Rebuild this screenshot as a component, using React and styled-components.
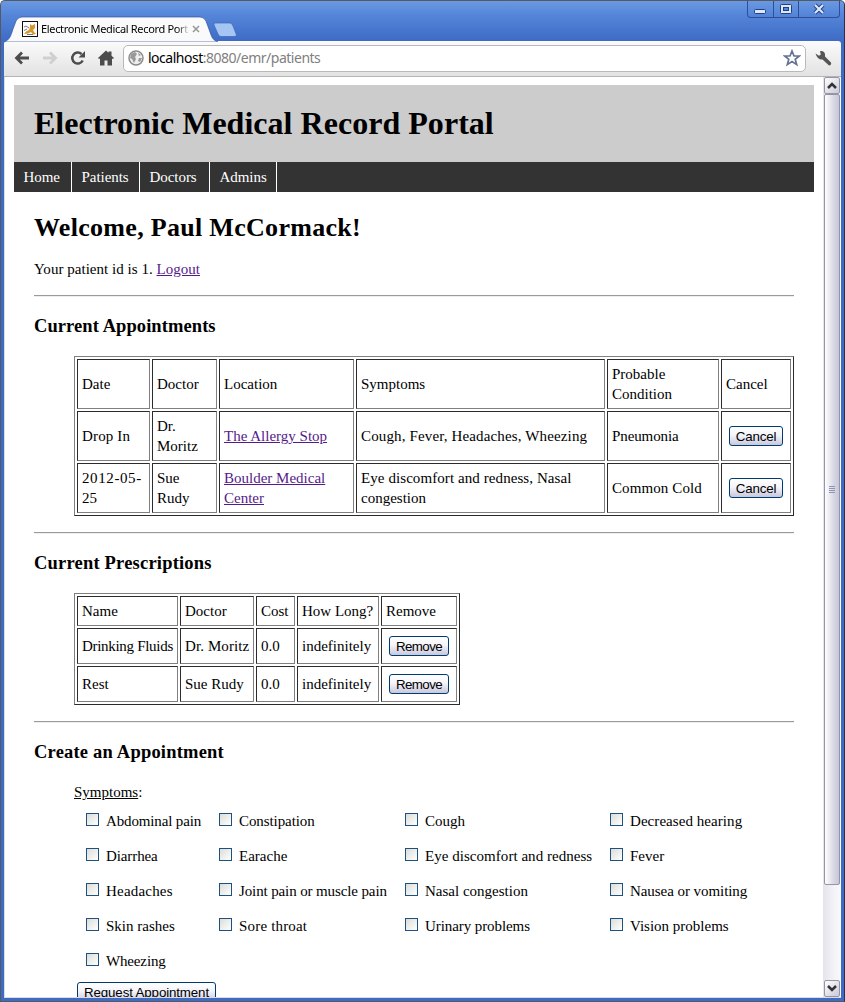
import React from 'react';
import styled, { createGlobalStyle } from 'styled-components';

const Global = createGlobalStyle`
  * { box-sizing: border-box; }
  body { margin: 0; background: #fff; overflow: hidden; }
`;

const Window = styled.div`
  width: 845px;
  height: 1002px;
  display: flex;
  flex-direction: column;
  border: 1px solid #57595e;
  border-right-color: #26324f;
  border-radius: 5px 5px 0 0;
  background: linear-gradient(#6a9ae2 0, #5585d8 14px, #3d6bc6 40px, #3d6bc6 100%);
  padding: 0 3px 3px 3px;
  font-family: "Noto Sans", sans-serif;
  overflow: hidden;
`;

const TitleBar = styled.div`
  height: 40px;
  flex: none;
  display: flex;
  align-items: flex-end;
  position: relative;
`;

const Tab = styled.div`
  width: 214px;
  height: 25px;
  position: relative;
  display: flex;
  align-items: center;
  padding-left: 18px;
  font-size: 11px;
  line-height: 16px;
`;

const TabShape = styled.svg`
  position: absolute;
  left: 0;
  top: 0;
`;

const Favicon = styled.svg`
  position: relative;
  flex: none;
`;

const TabTitle = styled.span`
  position: relative;
  margin-left: 3px;
  width: 147px;
  flex: none;
  white-space: nowrap;
  overflow: hidden;
  letter-spacing: -0.33px;
  mask-image: linear-gradient(90deg, #000 136px, transparent 149px);
`;

const TabClose = styled.svg`
  position: relative;
  margin-left: 4px;
  flex: none;
`;

const NewTab = styled.svg`
  margin: 0 0 3px -6px;
`;

const Controls = styled.div`
  position: absolute;
  right: 1px;
  top: 0;
  height: 17px;
  display: flex;
  border: 1px solid #2e4f97;
  border-top: 0;
  border-radius: 0 0 4px 4px;
`;

const Control = styled.div`
  width: ${(p) => p.$w}px;
  display: flex;
  align-items: center;
  justify-content: center;
  border-left: ${(p) => (p.$divided ? '1px solid #2e4f97' : '0')};
`;

const Toolbar = styled.div`
  height: 36px;
  flex: none;
  display: flex;
  align-items: center;
  padding: 0 9px 1px 10px;
  background: linear-gradient(#fbfbfb, #e2e2e2);
  border-bottom: 1px solid #b4b4b4;
  border-radius: 3px 3px 0 0;
`;

const Tool = styled.svg`
  flex: none;
  margin-right: ${(p) => p.$gap || 0}px;
`;

const Omnibox = styled.div`
  flex: 1;
  height: 27px;
  display: flex;
  align-items: center;
  padding: 0 4px 0 4px;
  background: #fff;
  border: 1px solid #b9b9b9;
  border-radius: 5px;
  margin-right: 9px;
`;

const Url = styled.div`
  flex: 1;
  margin-left: 4px;
  font-size: 14px;
  line-height: 20px;
  color: #808080;
  letter-spacing: -0.49px;
  b { color: #000; font-weight: 400; }
`;

const Viewport = styled.div`
  flex: 1;
  min-height: 0;
  border: solid #dcdcdc;
  border-width: 0 0 1px 1px;
  display: flex;
  overflow: hidden;
  background: #fff;
`;

const Page = styled.div`
  flex: 1;
  min-width: 0;
  padding: 8px 9px 0 9px;
  overflow: hidden;
  font: 15px/20px "Liberation Serif", serif;
  color: #000;
`;

const Banner = styled.header`
  height: 77px;
  background: #ccc;
  padding-left: 20px;
  h1 { margin: 0; font-size: 32px; line-height: 77px; letter-spacing: 0.03px; }
`;

const Nav = styled.nav`
  display: flex;
  height: 30px;
  background: #333;
`;

const NavItem = styled.a`
  width: ${(p) => p.$w}px;
  padding: 5px 0 5px 9.500px;
  border-right: 1px solid #fff;
  color: #fff;
  white-space: nowrap;
  letter-spacing: -0.05px;
`;

const Main = styled.main`
  padding: 19px 20px 0;
`;

const Welcome = styled.h2`
  margin: 0 0 14px;
  font-size: 26px;
  line-height: 34px;
  letter-spacing: 0.3px;
`;

const Line = styled.p`
  margin: 0 0 16px;
  letter-spacing: 0.03px;
`;

const Rule = styled.hr`
  height: 2px;
  margin: 0;
  border: 0;
  border-top: 1px solid #9a9a9a;
  background: #eee;
`;

const Heading = styled.h3`
  margin: 17px 0 18px;
  font-size: 18.5px;
  line-height: 24px;
  letter-spacing: ${(p) => p.$ls}px;
`;

const Table = styled.table`
  width: ${(p) => p.$w}px;
  margin: 0 0 16px 40px;
  table-layout: fixed;
  border-collapse: separate;
  border-spacing: 2px;
  border: 1px solid;
  border-color: #808080 #2c2c2c #2c2c2c #808080;
`;

const Row = styled.tr`
  height: ${(p) => p.$h}px;
`;

const Cell = styled.td`
  padding: 0 0 0 4px;
  border: 1px solid;
  border-color: #2c2c2c #808080 #808080 #2c2c2c;
  vertical-align: middle;
  white-space: nowrap;
`;

const Link = styled.a`
  color: #551a8b;
  text-decoration: underline;
`;

const Tracked = styled.span`
  letter-spacing: ${(p) => p.$ls}px;
`;

const Button = styled.button`
  display: block;
  width: ${(p) => p.$w}px;
  height: 20px;
  margin: 0 0 0 3px;
  padding: 1px 0 0;
  border: 1px solid #003c74;
  border-radius: 3px;
  background: linear-gradient(#fff, #f4f4fa 45%, #c9c7dc);
  font: 13.33px/18px "Liberation Sans", sans-serif;
  letter-spacing: ${(p) => p.$ls || 0}px;
  color: #000;
  white-space: nowrap;
`;

const Blockquote = styled.div`
  margin-left: 40px;
`;

const Legend = styled.div`
  margin-bottom: 1px;
`;

const Grid = styled.div`
  display: grid;
  grid-template-columns: 133px 186px 205px 160px;
  grid-auto-rows: 35px;
  padding-left: 12px;
  margin-bottom: 4px;
`;

const Option = styled.label`
  display: flex;
  align-items: center;
  gap: 7px;
  white-space: nowrap;
`;

const Box = styled.span`
  width: 13px;
  height: 13px;
  margin-bottom: 2px;
  border: 1px solid #1c5180;
  background: linear-gradient(135deg, #dcdcd7, #fff);
`;

const Scrollbar = styled.div`
  width: 18px;
  padding: 0 1px;
  display: flex;
  flex-direction: column;
  background: linear-gradient(90deg, #e4e4ec, #fbfbfe);
`;

const ScrollButton = styled.div`
  height: 17px;
  display: flex;
  align-items: center;
  justify-content: center;
  border: 1px solid #9595a5;
  border-radius: 2px;
  background: linear-gradient(135deg, #fff, #c9c9da);
`;

const Thumb = styled.div`
  height: 791px;
  margin-bottom: auto;
  display: flex;
  align-items: center;
  justify-content: center;
  border: 1px solid #9595a5;
  border-radius: 2px;
  background: linear-gradient(90deg, #fff, #d9d9e5 60%, #c6c6d8);
`;

const appointments = [
  [['Drop In'], ['Dr.', 'Moritz'], ['The Allergy Stop'], ['Cough, Fever, Headaches, Wheezing'], ['Pneumonia']],
  [['2012-05-', '25'], ['Sue', 'Rudy'], ['Boulder Medical', 'Center'], ['Eye discomfort and redness, Nasal', 'congestion'], ['Common Cold']],
];
const prescriptions = [
  ['Drinking Fluids', 'Dr. Moritz', '0.0', 'indefinitely'],
  ['Rest', 'Sue Rudy', '0.0', 'indefinitely'],
];
const symptoms = [
  'Abdominal pain', 'Constipation', 'Cough', 'Decreased hearing',
  'Diarrhea', 'Earache', 'Eye discomfort and redness', 'Fever',
  'Headaches', 'Joint pain or muscle pain', 'Nasal congestion', 'Nausea or vomiting',
  'Skin rashes', 'Sore throat', 'Urinary problems', 'Vision problems', 'Wheezing',
];

// Letter spacing, in px, for phrases that are set tighter or looser than the default.
const tracking = {
  'Drop In': 0.15,
  '2012-05-': 0.6,
  'Cough, Fever, Headaches, Wheezing': 0.14,
  'Eye discomfort and redness, Nasal': 0.08,
  'Pneumonia': -0.1,
  'Common Cold': 0.1,
  'Drinking Fluids': -0.3,
  'Dr. Moritz': 0.1,
  'Abdominal pain': -0.14,
  'Constipation': -0.08,
  'Decreased hearing': 0.06,
  'Diarrhea': -0.1,
  'Eye discomfort and redness': 0.04,
  'Headaches': 0.2,
  'Joint pain or muscle pain': -0.12,
  'Nausea or vomiting': -0.06,
  'Sore throat': 0.18,
  'Urinary problems': -0.08,
  'Wheezing': -0.15,
};

const T = ({ children }) => <Tracked $ls={tracking[children] || 0}>{children}</Tracked>;

const Lines = ({ items }) => items.map((t, i) => (
  <React.Fragment key={t}>{i > 0 && <br />}<T>{t}</T></React.Fragment>
));

const Columns = ({ widths }) => (
  <colgroup>{widths.map((w, i) => <col key={i} width={w} />)}</colgroup>
);

export default function App() {
  return (
    <Window>
      <Global />
      <TitleBar>
        <Tab>
          <TabShape width="214" height="26"><path d="M0 26 C6 24 7 19 9 13 L12 5 Q14 1 18 1 H196 Q200 1 202 5 L206 16 C208 22 209 24 214 26Z" fill="#fafafa" stroke="#2d55a8" strokeWidth=".7" /></TabShape>
          <Favicon width="16" height="16"><rect x=".5" y=".5" width="15" height="15" fill="#fff" stroke="#111" /><path d="M2 13L4 10.500 7 9 8 6V3l2 1.500L13 3v4l-2 2 1 2 2 2-3 .5L9 11l-3 1.500z" fill="#d8962e" /><path d="M2 6l2-1 3 2M2 9.500l3-1.500M5 13.500h6" fill="none" stroke="#777" /></Favicon>
          <TabTitle>Electronic Medical Record Portal</TabTitle>
          <TabClose width="8" height="8"><path d="M1 1l6 6M7 1l-6 6" stroke="#999" strokeWidth="1.6" /></TabClose>
        </Tab>
        <NewTab width="26" height="17"><path d="M3 2H18Q20 2 21 5L24.500 14Q24.500 15.500 22 15.500H9Q7 15.500 6 13L2 4Q1.500 2 3 2Z" fill="#a5c6f2" stroke="#3c69bb" strokeWidth=".7" /></NewTab>
        <Controls>
          <Control $w={25}><svg width="13" height="13"><rect x=".5" y="6.500" width="11" height="4" rx="1" fill="#dce8fa" stroke="#223f80" /></svg></Control>
          <Control $w={25} $divided><svg width="13" height="13"><rect x=".5" y="1.500" width="11" height="9" rx="1" fill="#dce8fa" stroke="#223f80" /><rect x="3.500" y="4.500" width="5" height="3" fill="#5585d8" stroke="#223f80" /></svg></Control>
          <Control $w={41} $divided><svg width="13" height="13"><path d="M2 2l8 8M10 2l-8 8" stroke="#223f80" strokeWidth="4" /><path d="M2 2l8 8M10 2l-8 8" stroke="#dce8fa" strokeWidth="2.200" /></svg></Control>
        </Controls>
      </TitleBar>
      <Toolbar>
        <Tool width="16" height="16" $gap={12}><path d="M15 8H3M8 2.500L2.500 8 8 13.500" fill="none" stroke="#4c4c4c" strokeWidth="2.800" /></Tool>
        <Tool width="16" height="16" $gap={12}><path d="M1 8H13M8 2.500L13.500 8 8 13.500" fill="none" stroke="#cfcfcf" strokeWidth="2.800" /></Tool>
        <Tool width="16" height="16" $gap={12}><path d="M12.700 10.500A5.500 5.500 0 1 1 11.500 4" fill="none" stroke="#4c4c4c" strokeWidth="2.500" /><path d="M15 1v6.500H8.500z" fill="#4c4c4c" /></Tool>
        <Tool width="16" height="16" $gap={9}><path d="M0 8L8 .5l2.500 2.300V1.500h3V5.700L16 8l-1 1-1-.5V15.500H9.500V10.500h-3v5H2V8.500L1 9z" fill="#4c4c4c" /></Tool>
        <Omnibox>
          <svg width="16" height="16"><circle cx="8" cy="8" r="7" fill="#eee" stroke="#8b8b8b" strokeWidth="1.500" /><path d="M3 4l4-2 2 2-2 3 1 2-2 4-2-4-2-1zM10 3l3 2-2 1zM11 8l3 0-2 4-2-1z" fill="#999" /></svg>
          <Url><b>localhost</b>:8080/emr/patients</Url>
          <svg width="18" height="18"><path d="M9 2l2 5h5.300l-4.100 3.300 1.500 5.300L9 12.500l-4.700 3.100 1.500-5.300L1.700 7H7z" fill="#fff" stroke="#667391" strokeWidth="1.700" /></svg>
        </Omnibox>
        <Tool width="17" height="17"><path d="M.5 3.500L4 5.800 5.800 4.500 5 1Q9 .3 10 4L10 6.500 16 12.500Q16.800 15 14 15.500L7.500 9.500Q2.500 10 .5 3.500z" fill="#555" /></Tool>
      </Toolbar>
      <Viewport>
        <Page>
          <Banner><h1>Electronic Medical Record Portal</h1></Banner>
          <Nav>
            <NavItem $w={58}>Home</NavItem>
            <NavItem $w={68}>Patients</NavItem>
            <NavItem $w={70}>Doctors</NavItem>
            <NavItem $w={67}>Admins</NavItem>
          </Nav>
          <Main>
            <Welcome>Welcome, Paul McCormack!</Welcome>
            <Line>Your patient id is 1. <Link>Logout</Link></Line>
            <Rule />
            <Heading $ls={0.08}>Current Appointments</Heading>
            <Table $w={720}>
              <Columns widths={[73, 65, 135, 249, 112, 70]} />
              <tbody>
                <Row $h={50}>
                  {[['Date'], ['Doctor'], ['Location'], ['Symptoms'], ['Probable', 'Condition'], ['Cancel']].map((c) => (
                    <Cell key={c[0]}><Lines items={c} /></Cell>
                  ))}
                </Row>
                {appointments.map((r) => (
                  <Row $h={50} key={r[0][0]}>
                    {r.map((c, i) => <Cell key={i}>{i === 2 ? <Link><Lines items={c} /></Link> : <Lines items={c} />}</Cell>)}
                    <Cell><Button $w={54} $ls={-0.15}>Cancel</Button></Cell>
                  </Row>
                ))}
              </tbody>
            </Table>
            <Rule />
            <Heading $ls={0.2}>Current Prescriptions</Heading>
            <Table $w={386}>
              <Columns widths={[101, 74, 39, 82, 76]} />
              <tbody>
                <Row $h={30}>
                  {['Name', 'Doctor', 'Cost', 'How Long?', 'Remove'].map((c) => <Cell key={c}>{c}</Cell>)}
                </Row>
                {prescriptions.map((r) => (
                  <Row $h={36} key={r[0]}>
                    {r.map((c, i) => <Cell key={i}><T>{c}</T></Cell>)}
                    <Cell><Button $w={60} $ls={-0.6}>Remove</Button></Cell>
                  </Row>
                ))}
              </tbody>
            </Table>
            <Rule />
            <Heading $ls={0.2}>Create an Appointment</Heading>
            <Blockquote>
              <Legend><u>Symptoms</u>:</Legend>
              <Grid>
                {symptoms.map((s) => <Option key={s}><Box /><T>{s}</T></Option>)}
              </Grid>
              <Button $w={139} $ls={-0.13}>Request Appointment</Button>
            </Blockquote>
          </Main>
        </Page>
        <Scrollbar>
          <ScrollButton><svg width="10" height="7"><path d="M1 6l4-4 4 4" fill="none" stroke="#333" strokeWidth="2.500" /></svg></ScrollButton>
          <Thumb><svg width="7" height="8"><path d="M0 .5h6M0 2.500h6M0 4.500h6M0 6.500h6" stroke="#8e95b0" /></svg></Thumb>
          <ScrollButton><svg width="10" height="7"><path d="M1 1l4 4 4-4" fill="none" stroke="#333" strokeWidth="2.500" /></svg></ScrollButton>
        </Scrollbar>
      </Viewport>
    </Window>
  );
}
